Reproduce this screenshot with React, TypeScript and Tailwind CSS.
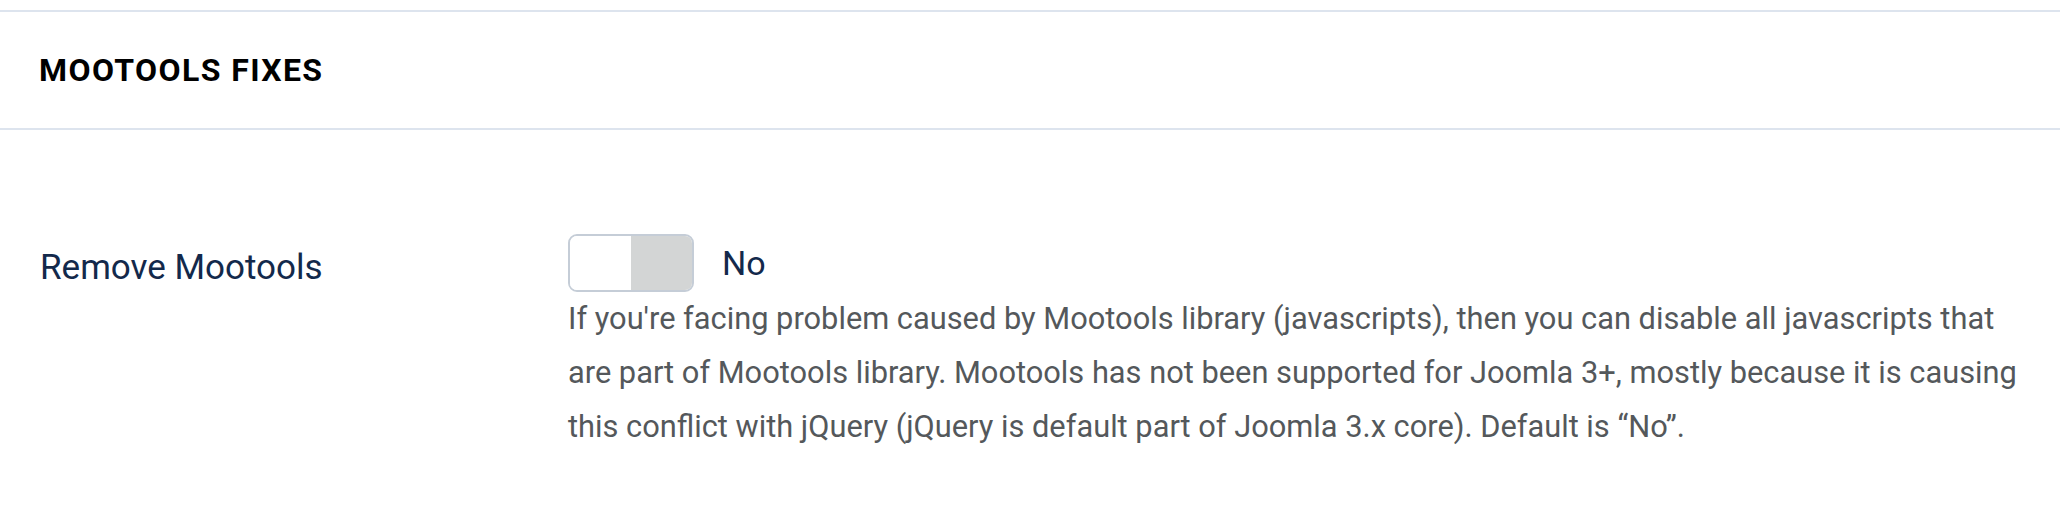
import React from "react";

export default function App() {
  return (
    <div className="w-[2060px] h-[514px] bg-white overflow-hidden" style={{ fontFamily: "Roboto, 'Liberation Sans', sans-serif" }}>
      <div className="h-[10px]" />
      <div className="border-t-2 border-b-2 border-[#dde4ee] h-[120px] flex items-center px-[39px]">
        <h2 className="text-[32px] font-bold uppercase tracking-[1.4px] text-black leading-none">Mootools Fixes</h2>
      </div>
      <div className="flex pt-[104px]">
        <div className="w-[568px] pl-[40px] pt-[14px]">
          <div className="text-[35px] leading-[40px] text-[#13294b]">Remove Mootools</div>
        </div>
        <div className="flex-1 pr-[20px]">
          <div className="flex items-center h-[58px]">
            <div className="w-[126px] h-[58px] rounded-[9px] border-2 border-[#c5cdd7] overflow-hidden flex">
              <div className="flex-1 bg-white" />
              <div className="flex-1 bg-[#d3d5d5]" />
            </div>
            <span className="ml-[28px] text-[34px] leading-none text-[#13294b]">No</span>
          </div>
          <p className="max-w-[1464px] text-[30.8px] leading-[54px] text-[#54585b]">
            If you're facing problem caused by Mootools library (javascripts), then you can disable all javascripts that are part of Mootools library. Mootools has not been supported for Joomla 3+, mostly because it is causing this conflict with jQuery (jQuery is default part of Joomla 3.x core). Default is “No”.
          </p>
        </div>
      </div>
    </div>
  );
}
